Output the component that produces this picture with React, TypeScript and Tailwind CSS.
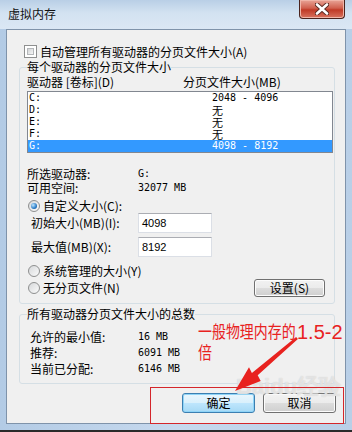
import React from 'react';

const drives = [
  { letter: 'C:', size: '2048 - 4096', cjk: false },
  { letter: 'D:', size: '无', cjk: true },
  { letter: 'E:', size: '无', cjk: true },
  { letter: 'F:', size: '无', cjk: true },
  { letter: 'G:', size: '4098 - 8192', cjk: false, selected: true },
];

const Checkbox = () => (
  <div className="h-[13px] w-[13px] border border-[#8e8f8f] bg-white p-[2px]">
    <div className="h-full w-full border border-[#b4b7ba] bg-[linear-gradient(135deg,#d2d4d6,#f6f6f6)]" />
  </div>
);

const Radio = ({ checked = false }: { checked?: boolean }) => (
  <div className="flex h-[12px] w-[12px] items-center justify-center rounded-full border border-[#8e8f8f] bg-[linear-gradient(135deg,#d6d8da,#fbfbfb)]">
    {checked && (
      <div className="h-[6px] w-[6px] rounded-full bg-[radial-gradient(circle_at_35%_35%,#bfe6ff,#2a7cc7_60%,#0d3f79)]" />
    )}
  </div>
);

const Field = ({ value }: { value: string }) => (
  <div className="flex h-[20px] w-[74px] items-center border border-[#dbdfe6] border-t-[#abadb3] bg-white pl-[3px] font-['Liberation_Sans',sans-serif] text-[11px]">
    {value}
  </div>
);

const Button = ({ label, primary = false }: { label: string; primary?: boolean }) => (
  <div
    className={
      primary
        ? 'flex h-[20px] w-[73px] items-center justify-center rounded-[3px] border border-[#3c7fb1] bg-[linear-gradient(#eaf6fd,#d9f0fc_50%,#bee6fd_50%,#a7d9f5)] shadow-[inset_0_0_0_1px_#8fd4f7]'
        : 'flex h-[20px] w-[73px] items-center justify-center rounded-[3px] border border-[#707070] bg-[linear-gradient(#f2f2f2,#ebebeb_50%,#dddddd_50%,#cfcfcf)] shadow-[inset_0_0_0_1px_#fcfcfc]'
    }
  >
    {label}
  </div>
);

export default function App() {
  return (
    <div className="relative h-[432px] w-[352px] overflow-hidden bg-[linear-gradient(90deg,#b3cbe5,#c6d9ee_50%,#b9cfe7)] font-['Noto_Sans_CJK_SC','Noto_Sans',sans-serif] text-[12px] leading-[14px] text-black">
      {/* title bar */}
      <div className="flex h-[29px] items-start bg-[linear-gradient(180deg,#b9cfe6_0%,#d3e2f1_45%,#dbe7f4_100%)]">
        <span className="ml-[8px] mt-[7px] text-[12px] leading-[14px] text-[#111]">虚拟内存</span>
        <div className="ml-auto mr-[7px] flex h-[19px] w-[46px] items-center justify-center rounded-b-[4px] border border-t-0 border-[#4a231d] bg-[linear-gradient(#e9a597,#d0604e_45%,#c03a26_55%,#d8735f)] shadow-[inset_0_0_0_1px_#f0b5a8]">
          <svg width="14" height="12" viewBox="0 0 14 12">
            <path d="M2 1.5 L12 10.5 M12 1.5 L2 10.5" stroke="#5a2a22" strokeWidth="4.5" strokeLinecap="round" />
            <path d="M2 1.5 L12 10.5 M12 1.5 L2 10.5" stroke="#ffffff" strokeWidth="2.6" strokeLinecap="round" />
          </svg>
        </div>
      </div>

      {/* client area */}
      <div className="ml-[6px] h-[395px] w-[340px] border border-[#7f93aa] bg-[#f0f0f0]">
        <div className="mt-[15px] flex h-[13px] items-center gap-[3px] pl-[17px]">
          <Checkbox />
          <span>自动管理所有驱动器的分页文件大小(A)</span>
        </div>

        <fieldset className="ml-[12px] mt-[2px] w-[316px] rounded-[3px] border border-[#d5dfe5] pb-[6px] pl-[7px]">
          <legend className="px-0 leading-[14px]">每个驱动器的分页文件大小</legend>
          <div className="mt-[1px] grid h-[14px] grid-cols-[156px_1fr]">
            <span>驱动器 [卷标](D)</span>
            <span>分页文件大小(MB)</span>
          </div>
          <div className="mt-[2px] h-[62px] w-[306px] border border-[#828790] bg-white">
            {drives.map((d) => (
              <div
                key={d.letter}
                className={
                  d.selected
                    ? 'grid h-[12px] grid-cols-[183px_1fr] items-center bg-[#3399ff] pl-[1px] text-white'
                    : 'grid h-[12px] grid-cols-[183px_1fr] items-center pl-[1px]'
                }
              >
                <span className="font-['DejaVu_Sans_Mono',monospace] text-[10px] leading-[12px]">{d.letter}</span>
                <span className={d.cjk ? 'text-[11px] leading-[12px]' : "font-['DejaVu_Sans_Mono',monospace] text-[10px] leading-[12px]"}>
                  {d.size}
                </span>
              </div>
            ))}
          </div>

          <div className="mt-[14px] grid grid-cols-[111px_1fr]">
            <span>所选驱动器:</span>
            <span className="font-['DejaVu_Sans_Mono',monospace] text-[10px]">G:</span>
            <span>可用空间:</span>
            <span className="font-['DejaVu_Sans_Mono',monospace] text-[10px]">32077 MB</span>
          </div>

          <div className="mt-[4px] flex h-[14px] items-center gap-[3px] pl-[1px]">
            <Radio checked />
            <span>自定义大小(C):</span>
          </div>
          <div className="grid h-[20px] grid-cols-[107px_74px] items-center pl-[4px]">
            <span>初始大小(MB)(I):</span>
            <Field value="4098" />
          </div>
          <div className="mt-[4px] grid h-[20px] grid-cols-[107px_74px] items-center pl-[4px]">
            <span>最大值(MB)(X):</span>
            <Field value="8192" />
          </div>
          <div className="mt-[7px] flex h-[14px] items-center gap-[3px] pl-[1px]">
            <Radio />
            <span>系统管理的大小(Y)</span>
          </div>
          <div className="mt-[1px] flex h-[18px] items-center justify-between pl-[1px] pr-[9px]">
            <div className="flex items-center gap-[3px]">
              <Radio />
              <span>无分页文件(N)</span>
            </div>
            <div className="flex h-[18px] w-[71px] items-center justify-center rounded-[3px] border border-[#707070] bg-[linear-gradient(#f2f2f2,#ebebeb_50%,#dddddd_50%,#cfcfcf)] shadow-[inset_0_0_0_1px_#fcfcfc]">
              设置(S)
            </div>
          </div>
        </fieldset>

        <fieldset className="ml-[12px] mt-[3px] w-[316px] rounded-[3px] border border-[#d5dfe5] pb-[6px] pl-[7px]">
          <legend className="px-0 leading-[14px]">所有驱动器分页文件大小的总数</legend>
          <div className="mt-[8px] grid grid-cols-[108px_1fr] pl-[3px] leading-[16px]">
            <span>允许的最小值:</span>
            <span className="font-['DejaVu_Sans_Mono',monospace] text-[10px]">16 MB</span>
            <span>推荐:</span>
            <span className="font-['DejaVu_Sans_Mono',monospace] text-[10px]">6091 MB</span>
            <span>当前已分配:</span>
            <span className="font-['DejaVu_Sans_Mono',monospace] text-[10px]">6146 MB</span>
          </div>
        </fieldset>

        <div className="mt-[9px] flex justify-end gap-[8px] pr-[9px]">
          <Button label="确定" primary />
          <Button label="取消" />
        </div>
      </div>
      <div className="h-[6px]" />
      <div className="h-[2px] bg-[#2a2a2a]" />

      {/* annotation overlay: watermark, red box, note and arrow */}
      <div className="pointer-events-none absolute left-[236px] top-[376px] font-['Liberation_Sans',sans-serif] text-[22px] font-bold leading-[22px] text-white/50 [text-shadow:0_0_1px_#c4c4c4]">
        Baidu经验
      </div>
      <div className="pointer-events-none absolute left-[150px] top-[387px] h-[37px] w-[194px] border border-[#d4262b]" />
      <div className="pointer-events-none absolute left-[198px] top-[321px] whitespace-nowrap leading-[19px] text-[#e8221f]">
        <div className="flex items-end">
          <span className="inline-block w-[99px]">
            <span className="inline-block origin-left scale-x-[0.82] text-[17px]">一般物理内存的</span>
          </span>
          <span className="font-['Liberation_Sans',sans-serif] text-[20px]">1.5-2</span>
        </div>
        <span className="inline-block origin-left scale-x-[0.82] text-[17px]">倍</span>
      </div>
      <svg className="pointer-events-none absolute left-0 top-0" width="352" height="432" viewBox="0 0 352 432">
        <polygon
          points="296.1,336.9 251.9,372.9 249,367.3 235,391 260.7,380.9 257.7,375.3 297.9,339.1"
          fill="#e8221f"
        />
      </svg>
    </div>
  );
}
